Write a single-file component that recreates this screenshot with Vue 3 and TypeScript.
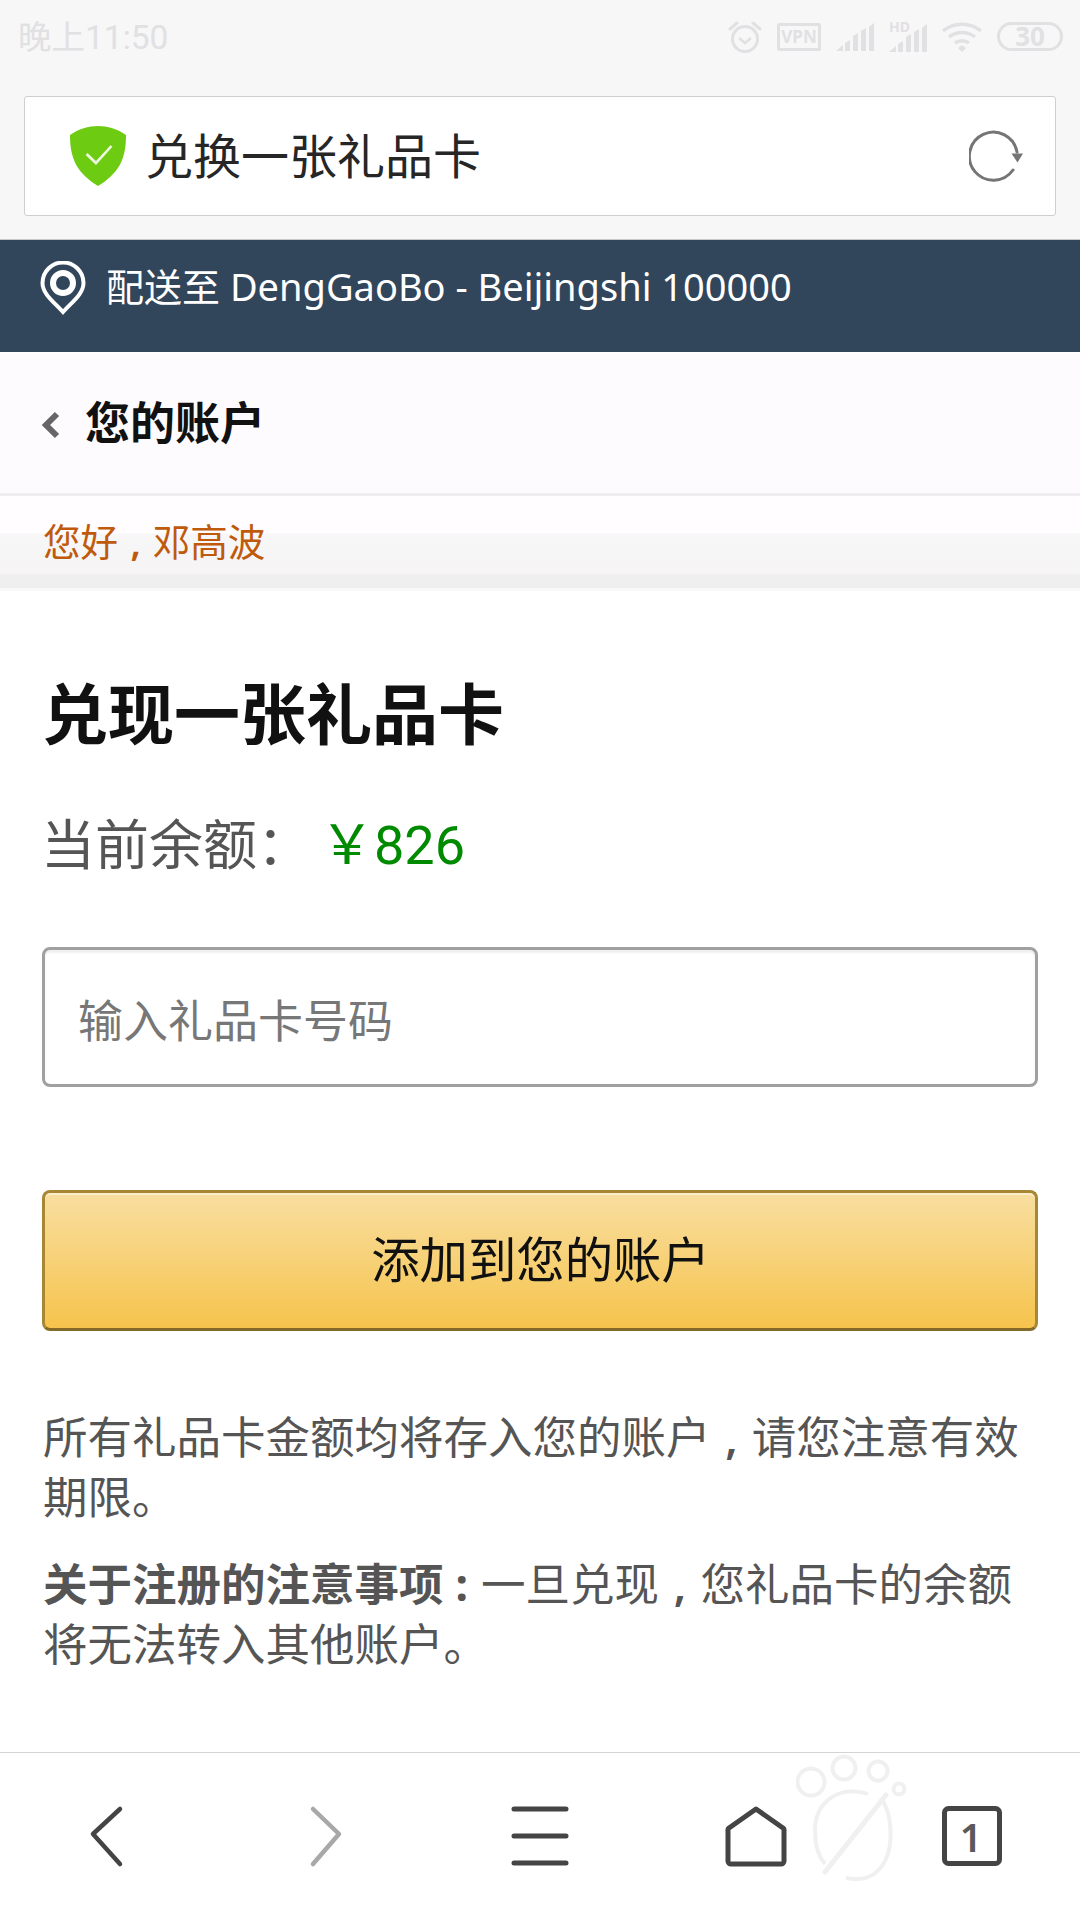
<template>
  <div class="page">
    <div class="top-chrome">
      <div class="status-bar">
        <span class="clock">晚上11:50</span>
        <div class="status-icons">
          <svg width="34" height="32" viewBox="0 0 34 32" fill="none" stroke="#e1e0e3" stroke-width="3">
            <circle cx="17" cy="18" r="12.500" />
            <path d="M11 17l6 5 6-5" stroke-width="2.600" />
            <path d="M2 8l7-6M32 8l-7-6" stroke-linecap="round" />
          </svg>
          <svg width="44" height="28" viewBox="0 0 44 28">
            <rect x="1.500" y="1.500" width="41" height="25" rx="1" fill="none" stroke="#e1e0e3" stroke-width="3" />
            <text x="22" y="20" text-anchor="middle" class="icon-text vpn">VPN</text>
          </svg>
          <svg width="38" height="28" viewBox="0 0 38 28" fill="#e1e0e3">
            <path :d="signalBars" />
          </svg>
          <svg width="38" height="30" viewBox="0 0 38 30" fill="#e1e0e3">
            <text x="0" y="10" class="icon-text hd">HD</text>
            <path :d="signalBars" transform="translate(0 2)" />
          </svg>
          <svg width="40" height="30" viewBox="0 0 40 30" fill="none" stroke="#e1e0e3" stroke-width="3.400">
            <path d="M1 9c11-9 27-9 38 0M7 15c8-6 18-6 26 0M13 21c4-3 10-3 14 0" />
            <path d="M16 26l4-3 4 3-4 4z" fill="#e1e0e3" stroke="none" />
          </svg>
          <svg width="66" height="30" viewBox="0 0 66 30">
            <rect x="1.500" y="1.500" width="63" height="26" rx="13" fill="none" stroke="#e1e0e3" stroke-width="3" />
            <text x="33" y="24" text-anchor="middle" class="icon-text batt">30</text>
          </svg>
        </div>
      </div>
      <div class="url-card">
        <svg class="shield" width="56" height="60" viewBox="0 0 54 60" preserveAspectRatio="none">
          <path d="M0 9C8 3 18 0 27 0s19 3 27 9c0 10-1 20-6 30-5 9-13 16-21 21C19 55 11 48 6 39 1 29 0 19 0 9z" fill="#6dcb12" />
          <path d="M16 28l9 9 15-17" fill="none" stroke="#eef9e0" stroke-width="2.600" />
        </svg>
        <span class="url-title">兑换一张礼品卡</span>
        <svg class="refresh" width="62" height="52" viewBox="0 0 62 52" fill="none">
          <path d="M44 40A24 24 0 1 1 48 22" stroke="#757575" stroke-width="3" stroke-linecap="round" />
          <path d="M42.500 23.500H54L48.500 32.500z" fill="#757575" />
        </svg>
      </div>
    </div>

    <div class="deliver-bar">
      <svg width="46" height="54" viewBox="0 0 46 54" fill="none" stroke="#fff">
        <path d="M23 51C14 41 2.500 33 2.500 22a20.500 20.500 0 0 1 41 0C43.500 33 32 41 23 51z" stroke-width="4" />
        <circle cx="23" cy="22" r="10" stroke-width="6" />
      </svg>
      <span>配送至 DengGaoBo - Beijingshi 100000</span>
    </div>

    <div class="crumb">
      <svg width="18" height="28" viewBox="0 0 18 28" fill="none">
        <path d="M15 3L4 14l11 11" stroke="#666" stroke-width="6" />
      </svg>
      <span>您的账户</span>
    </div>

    <div class="greeting">您好<span class="comma">,</span>邓高波</div>

    <main class="content">
      <h1>兑现一张礼品卡</h1>
      <div class="balance">
        <span class="balance-label">当前余额：</span>
        <span class="balance-value">￥826</span>
      </div>
      <input class="code-input" type="text" placeholder="输入礼品卡号码" />
      <button class="add-btn" type="button">添加到您的账户</button>
      <p>所有礼品卡金额均将存入您的账户<span class="comma">,</span>请您注意有效期限。</p>
      <p><strong>关于注册的注意事项<span class="colon">:</span></strong>一旦兑现<span class="comma">,</span>您礼品卡的余额将无法转入其他账户。</p>
    </main>

    <nav class="bottom-bar">
      <svg v-for="item in navIcons" :key="item.id" width="216" height="167" viewBox="0 0 216 167" fill="none">
        <g v-if="item.id === 'back'" stroke="#444" stroke-width="4.500" stroke-linecap="round" stroke-linejoin="round">
          <path d="M120 56L93 81l27 30" />
        </g>
        <g v-else-if="item.id === 'forward'" stroke="#a8a8a8" stroke-width="4.500" stroke-linecap="round" stroke-linejoin="round">
          <path d="M97 56l26 25-26 30" />
        </g>
        <g v-else-if="item.id === 'menu'" stroke="#444" stroke-width="5" stroke-linecap="round">
          <path d="M82 56h52M82 83h52M82 110h52" />
        </g>
        <g v-else-if="item.id === 'home'" stroke="#444" stroke-width="5" stroke-linejoin="round">
          <path d="M108 56l27 19a3 3 0 0 1 1 3v30a3 3 0 0 1-3 3H83a3 3 0 0 1-3-3V78a3 3 0 0 1 1-3z" />
        </g>
        <g v-else>
          <rect x="80.500" y="55.500" width="55" height="55" rx="4" stroke="#444" stroke-width="5" />
          <text x="107" y="99" text-anchor="middle" class="tab-count">1</text>
        </g>
      </svg>
      <svg class="paw" width="110" height="130" viewBox="0 0 110 130" fill="none" stroke="#f0f0f0">
        <circle cx="15" cy="29" r="13.500" stroke-width="4" />
        <circle cx="48" cy="15" r="11.500" stroke-width="4" />
        <circle cx="82" cy="18" r="9.500" stroke-width="4" />
        <circle cx="103" cy="36" r="5.500" stroke-width="4" />
        <path d="M72 41C64 38 52 37 42 41 28 47 19 58 19 78c0 14 3 25 10 33M50 125c14 3 28 0 36-12 7-10 10-24 8-42-1-11-5-20-9-26" stroke-width="4" />
        <path d="M90 42L29 119" stroke-width="5" stroke-linecap="round" />
      </svg>
    </nav>
  </div>
</template>

<script setup lang="ts">
const navIcons = [{ id: 'back' }, { id: 'forward' }, { id: 'menu' }, { id: 'home' }, { id: 'tabs' }]
const signalBars = 'M0 28l7-6v6zM9 28v-8l5-3v11zM17 28V13l5-3v18zM25 28V8l5-3v23zM33 28V4l5-4v28z'
</script>

<style>
html, body { margin: 0; padding: 0; background: #fff; }
</style>

<style scoped>
.page { width: 1080px; height: 1920px; display: flex; flex-direction: column; font-family: "Noto Sans", "Noto Sans CJK SC", sans-serif; background: #fff; overflow: hidden; }

.top-chrome { background: #f7f7f7; height: 239px; border-bottom: 1px solid #c8c8c8; padding: 0 24px; }
.status-bar { height: 96px; margin: 0 -24px; padding: 0 17px 23px 18px; box-sizing: border-box; display: flex; align-items: center; justify-content: space-between; }
.clock { font-family: Roboto, "Noto Sans CJK SC", sans-serif; font-size: 33.500px; color: #e1e0e3; line-height: 40px; margin-top: 2px; }
.status-icons { display: flex; align-items: center; gap: 15px; }
.icon-text { font-family: "Noto Sans", sans-serif; font-weight: 700; fill: #e1e0e3; }
.vpn { font-size: 17px; }
.hd { font-size: 14px; }
.batt { font-size: 26px; }

.url-card { height: 120px; box-sizing: border-box; background: #fff; border: 1px solid #cfcfcf; border-radius: 3px; display: flex; align-items: center; padding: 0 24px 0 45px; }
.shield { margin-right: 19px; }
.url-title { flex: 1; font-size: 48px; line-height: 64px; color: #262626; }

.deliver-bar { height: 112px; background: #31455b; color: #fff; display: flex; align-items: center; gap: 20px; padding: 0 0 16px 40px; box-sizing: border-box; font-size: 38px; }
.deliver-bar span { margin-bottom: 8px; }

.crumb { height: 139px; margin-top: 2px; background: #fefbfe; display: flex; align-items: center; padding-left: 42px; gap: 25px; font-size: 45px; font-weight: 700; color: #111; box-sizing: border-box; }
.crumb svg { margin-top: 3px; }
.crumb span { margin-bottom: 6px; }

.greeting { height: 98px; box-sizing: border-box; padding: 24px 0 0 43px; border-top: 3px solid #efedef; font-size: 37.500px; line-height: 44px; color: #bf5a0c; background: linear-gradient(#fffdff 0, #fffdff 37px, #f7f7f7 38px, #f6f4f5 78px, #efefef 79px, #eee 92px, #f8f8f8 92px); }
.comma { margin: 0 0.32em 0 0.33em; font-weight: 600; }
.colon { margin: 0 13px 0 12px; }

.content { flex: 1; padding: 0 42px; }
h1 { margin: 80px 0 0; font-size: 66px; line-height: 84px; font-weight: 700; color: #111; }
.balance { margin: 50px 0 0 -1px; display: flex; align-items: center; gap: 9px; font-size: 54px; line-height: 74px; }
.balance-label { color: #555; }
.balance-value { font-family: Roboto, "Noto Sans CJK SC", sans-serif; color: #008a00; margin-top: 4px; }
.code-input { display: block; width: 100%; height: 140px; margin-top: 64px; box-sizing: border-box; border: 3px solid #a0a0a0; border-radius: 8px; padding: 6px 33px 0; background: #fff; box-shadow: inset 0 3px 2px #f0f0f0; font-family: inherit; font-size: 45px; outline: none; }
.code-input::placeholder { color: #777; opacity: 1; }
.add-btn { display: block; width: 100%; height: 141px; margin-top: 103px; box-sizing: border-box; border: 3px solid #a88734; border-bottom-color: #846a29; border-radius: 8px; background: linear-gradient(#f8dea0, #f6c44d); box-shadow: inset 0 2px 0 #fdeecb; font-family: inherit; font-size: 48.400px; color: #111; padding: 0 0 7px 1px; }
p { margin: 0 0 0 1px; font-size: 44.500px; line-height: 60px; color: #555; }
.add-btn + p { margin-top: 76px; }
p + p { margin-top: 27px; }
strong { font-weight: 700; }

.bottom-bar { position: relative; height: 168px; box-sizing: border-box; border-top: 1px solid #d4d4d4; display: flex; background: #fff; }
.paw { position: absolute; left: 796px; top: 0; }
.tab-count { font-family: "Noto Sans", sans-serif; font-size: 39px; font-weight: 600; fill: #5a5a5a; }
</style>
